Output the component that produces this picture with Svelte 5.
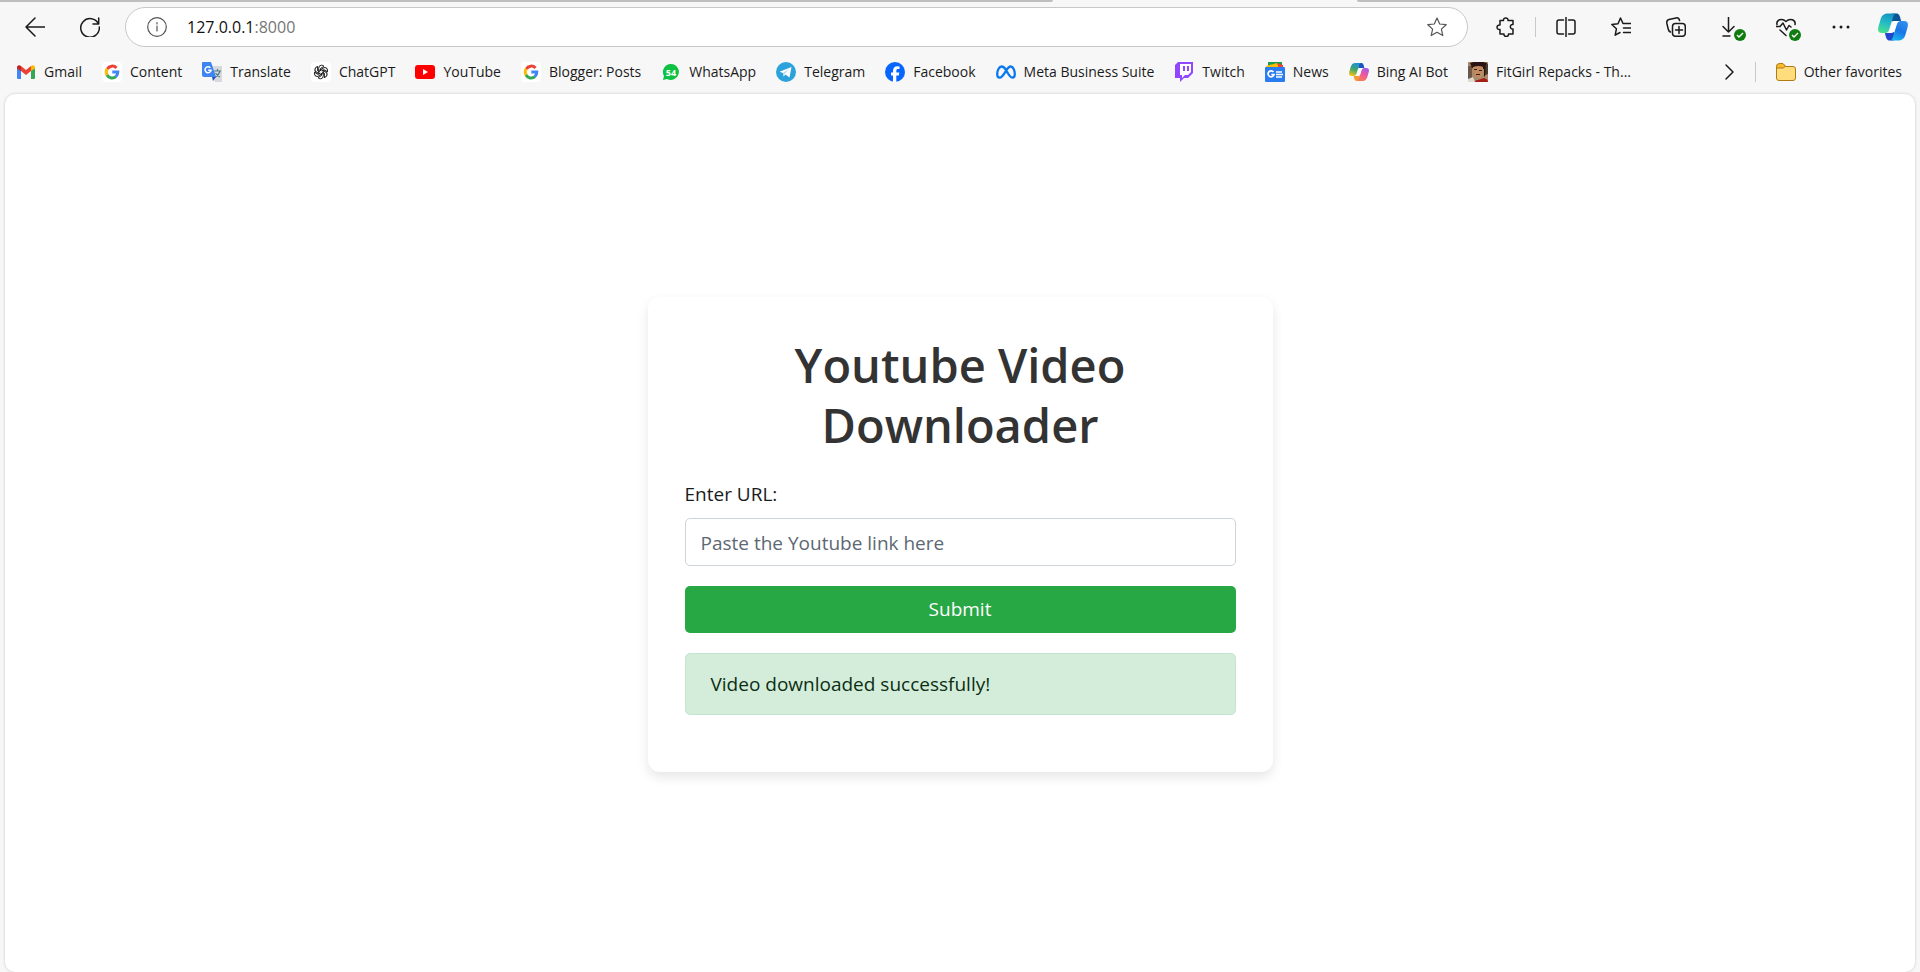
<script>
  let url = $state('');

  const bookmarks = [
    { id: 'gmail', label: 'Gmail' },
    { id: 'google', label: 'Content' },
    { id: 'translate', label: 'Translate' },
    { id: 'chatgpt', label: 'ChatGPT' },
    { id: 'youtube', label: 'YouTube' },
    { id: 'google', label: 'Blogger: Posts' },
    { id: 'whatsapp', label: 'WhatsApp' },
    { id: 'telegram', label: 'Telegram' },
    { id: 'facebook', label: 'Facebook' },
    { id: 'meta', label: 'Meta Business Suite' },
    { id: 'twitch', label: 'Twitch' },
    { id: 'news', label: 'News' },
    { id: 'copilot', label: 'Bing AI Bot' },
    { id: 'portrait', label: 'FitGirl Repacks - Th...' }
  ];
</script>

{#snippet copilot(id)}
  <defs>
    <linearGradient id="{id}-a" x1="0.6" y1="0" x2="0.3" y2="1">
      <stop offset="0" stop-color={id === 'small' ? '#1c8fd8' : '#1593c4'} />
      <stop offset="0.5" stop-color={id === 'small' ? '#3fa66a' : '#25bcc6'} />
      <stop offset="1" stop-color={id === 'small' ? '#f5c518' : '#4be08c'} />
    </linearGradient>
    <linearGradient id="{id}-b" x1="0.7" y1="0" x2="0.3" y2="1">
      <stop offset="0" stop-color={id === 'small' ? '#a25be8' : '#2f8ff0'} />
      <stop offset="0.5" stop-color={id === 'small' ? '#ee5a9c' : '#1b76e6'} />
      <stop offset="1" stop-color={id === 'small' ? '#fa7b52' : '#19b5f0'} />
    </linearGradient>
  </defs>
  <path fill={id === 'small' ? '#1a56c0' : '#0b5596'} d="M14 .5h4.500c2.500 0 3.500 2 4.500 7.500h-4l-5 1z" />
  <path fill={id === 'small' ? '#f79a2d' : '#2346cc'} d="M16 27.500h-4.500c-2.500 0-3.500-2-4.500-7.500h4l5-1z" />
  <path fill="url(#{id}-a)" d="M10 .5h8c-2 .500-2.500 2-3.500 5.500l-3 9.500c-1 3.500-2 4.500-5 4.500H4c-4 0-4.500-3-3.500-6.500l2-7C3.500 3 5.500.5 10 .5z" />
  <path fill="url(#{id}-b)" d="M20 27.500h-8c2-.500 2.500-2 3.500-5.500l3-9.500c1-3.500 2-4.500 5-4.500H26c4 0 4.500 3 3.500 6.500l-2 7c-1 3.500-3 6-7.500 6z" />
  <path fill="#fff" d="M14.500 8H21q-2 1-2.500 3.500l-1.800 5.500q-1 3-3.200 3H9.500q2-1 2.500-3.500l1.500-5z" />
{/snippet}

{#snippet site(id)}
  {#if id === 'gmail'}
    <svg viewBox="0 0 20 20" aria-hidden="true">
      <path fill="#4285f4" d="M1 5v11q0 1 1 1h3V8z" />
      <path fill="#34a853" d="M15 8v9h3q1 0 1-1V5z" />
      <path fill="#ea4335" d="M5 4l5 4 5-4v5l-5 4-5-4z" />
      <path fill="#c5221f" d="M1 5.500C1 3 3.500 2.500 5 4v5L1 6.500z" />
      <path fill="#fbbc04" d="M19 5.500C19 3 16.500 2.500 15 4v5l4-2.500z" />
    </svg>
  {:else if id === 'google'}
    <svg viewBox="0 0 20 20" aria-hidden="true">
      <rect width="20" height="20" rx="4" fill="#fff" />
      <g fill="none" stroke-width="3">
        <path stroke="#ea4335" d="M5.200 7A5.800 5.800 0 0 1 14.500 6" />
        <path stroke="#fbbc05" d="M5.200 13.200A6 6 0 0 1 5.200 6.800" />
        <path stroke="#34a853" d="M5 13a5.900 5.900 0 0 0 9 1.600" />
        <path stroke="#4285f4" d="M10.300 10h5.500q0 3-2 4.700" />
      </g>
    </svg>
  {:else if id === 'translate'}
    <svg viewBox="0 0 20 20" aria-hidden="true">
      <path fill="#d7d9dc" d="M8 4h12v16h-7z" />
      <path stroke="#4d7f86" stroke-width="1.200" fill="none" d="M12 9h7M15.500 7v2M18 9q-1 4-5 6M13.500 11q2 3 4.500 4" />
      <path fill="#3f84f3" d="M1 0h8l5 15H2q-2 0-2-2V1q0-1 1-1z" />
      <path fill="#2750c0" d="M10 15h4l-3 4z" />
      <path fill="none" stroke="#fff" stroke-width="1.500" d="M8.300 5.700A3 3 0 1 0 9 8.300H6.200" />
    </svg>
  {:else if id === 'chatgpt'}
    <svg viewBox="0 0 20 20" aria-hidden="true">
      <rect width="20" height="20" rx="4" fill="#fff" />
      <g fill="none" stroke="#222" stroke-width="1" stroke-linejoin="round">
        {#each [0, 60, 120, 180, 240, 300] as turn}
          <path transform="rotate({turn} 10 10)" d="M7.700 11.300V6.200Q7.700 3.200 10.500 3.200Q12 3.200 13 4.300L9.500 6.400V9" />
        {/each}
      </g>
    </svg>
  {:else if id === 'youtube'}
    <svg viewBox="0 0 20 20" aria-hidden="true">
      <rect y="3" width="20" height="14" rx="3" fill="#f00" />
      <path fill="#fff" d="M8 7l5 3-5 3z" />
    </svg>
  {:else if id === 'whatsapp'}
    <svg viewBox="0 0 20 20" aria-hidden="true">
      <path fill="#0dc143" d="M10 2a8 8 0 1 1-4 15l-4 1 1-4A8 8 0 0 1 10 2z" />
      <text x="10" y="13.500" text-anchor="middle" class="unread">54</text>
    </svg>
  {:else if id === 'telegram'}
    <svg viewBox="0 0 20 20" aria-hidden="true">
      <circle cx="10" cy="10" r="10" fill="#2ba2dc" />
      <path fill="#fff" d="M3.500 9.800L15.500 5l-2 10.500-4-3-2 2-.5-3.500z" />
      <path fill="#b5d8ec" d="M7 11l6-4-4.500 5-1 2.500z" />
    </svg>
  {:else if id === 'facebook'}
    <svg viewBox="0 0 20 20" aria-hidden="true">
      <circle cx="10" cy="10" r="10" fill="#0866ff" />
      <path fill="#fff" d="M8 20v-6.500H6v-3h2V9c0-3.300 1.500-4.800 4.500-4.800l2 .2v2.700h-1.300c-1.400 0-1.900.6-1.900 1.900v1.500h3l-.5 3h-2.500V20z" />
    </svg>
  {:else if id === 'meta'}
    <svg viewBox="0 0 20 20" aria-hidden="true">
      <path fill="none" stroke="#0a78f0" stroke-width="2.300" d="M10 8C8.500 5.500 7.200 4.500 5.700 4.500 3 4.500 1.200 8.500 1.200 12c0 2.500 1 3.700 2.500 3.700C6 15.700 7.500 13 10 8.800 12 5.500 13.200 4.500 14.700 4.500c2.500 0 4.100 4 4.100 7.500 0 2.500-1 3.700-2.500 3.700C14 15.700 12.500 12.500 10 8z" />
    </svg>
  {:else if id === 'twitch'}
    <svg viewBox="0 0 20 20" aria-hidden="true">
      <path fill="#9146ff" d="M4 0h15v11l-5 5h-4l-4 4v-4H1V3z" />
      <path fill="#fff" d="M6 2h11v8l-3 3h-3l-3 3v-3H6z" />
      <path fill="#9146ff" d="M9 4h2v5H9zM13 4h2v5h-2z" />
    </svg>
  {:else if id === 'news'}
    <svg viewBox="0 0 20 20" aria-hidden="true">
      <path fill="#1e9c50" d="M3 0h14v6H3z" />
      <path fill="#ea4335" d="M11 1l7 2v4h-9z" />
      <path fill="#fbbc04" d="M1 4l11-3 2 6H2z" />
      <rect y="5" width="20" height="15" rx="1" fill="#2a7df0" />
      <path fill="none" stroke="#fff" stroke-width="1.700" d="M8.500 10A3 3 0 1 0 9 12.500H6.300M11 10h6M11 12.500h7M11 15h6" />
    </svg>
  {:else if id === 'copilot'}
    <svg viewBox="0 0 30 28" aria-hidden="true">{@render copilot('small')}</svg>
  {:else if id === 'portrait'}
    <svg viewBox="0 0 20 20" aria-hidden="true">
      <rect width="20" height="20" fill="#a98a6a" />
      <path fill="#6d5747" d="M0 4h4v16H0z" />
      <path fill="#e0dad2" d="M0 17l5-2 2 5H0z" />
      <path fill="#2a1512" d="M2 1q8-3 17 0v10l-3 4V7L4 6z" />
      <path fill="#c08a5e" d="M5 5q6-2 10 0v6q-1 5-5 5-3-1-5-7z" />
      <path fill="#3a1c16" d="M6 7h3v1H6zM11 8h3v1h-3zM8 12h4v1H8z" />
      <path fill="#a51d16" d="M7 20q0-2 3-2l6-2q4 1 4 4z" />
      <path fill="#4c3b2f" d="M18 2h2v10l-3 1z" />
    </svg>
  {/if}
{/snippet}

<div class="browser">
  <div class="tabs"><span class="tab-left"></span><span class="tab-right"></span></div>

  <header class="toolbar">
    <button class="tool" aria-label="Back">
      <svg class="line" viewBox="0 0 20 20"><path d="M20 10H1M10 1L1 10l9 9" /></svg>
    </button>
    <button class="tool" aria-label="Refresh">
      <svg class="line" viewBox="0 0 20 20"><path d="M18.500 7A9.300 9.300 0 1 0 19.300 10M18.700 1v6H13" /></svg>
    </button>

    <div class="address">
      <button class="plain" aria-label="Site information">
        <svg class="thin" viewBox="0 0 20 20"><circle cx="10" cy="10" r="9.300" /><path d="M10 9v5M10 5.500V7" /></svg>
      </button>
      <a class="location" href="#top">127.0.0.1<span>:8000</span></a>
      <button class="plain" aria-label="Add to favorites">
        <svg class="thin" viewBox="0 0 20 20"><path d="M10 1l2.700 6 6.500.700-4.800 4.400 1.400 6.500L10 15.300l-5.800 3.300 1.400-6.500L.8 7.700 7.300 7z" /></svg>
      </button>
    </div>

    <button class="tool" aria-label="Extensions">
      <svg class="line" viewBox="0 0 20 20"><path d="M4 3.500h3.500c-.5-3.500 5-3.500 4.500 0H17v4c-3.500-.700-3.500 5.200 0 4.500v5h-4.500c.5 3.300-5 3.300-4.500 0H4v-4.500c-4 .600-4-5 0-4.500z" /></svg>
    </button>
    <span class="rule"></span>
    <button class="tool" aria-label="Split screen">
      <svg class="line" viewBox="0 0 20 20"><path d="M10 0v20M7.500 3H3Q1 3 1 5v10q0 2 2 2h4.500M12.500 3H17q2 0 2 2v10q0 2-2 2h-4.500" /></svg>
    </button>
    <button class="tool" aria-label="Favorites">
      <svg class="line" viewBox="0 0 20 20"><path d="M13.500 6.500H12L9.500 1 7 6.700.8 7.500l4.600 4.300-1.200 6.400L9 15.500M13 6.500h7M12.500 11H20M12.500 15.500H20" /></svg>
    </button>
    <button class="tool" aria-label="Collections">
      <svg class="line" viewBox="0 0 20 20"><rect x="6.500" y="6.500" width="12.800" height="12.800" rx="3" /><path d="M13 9.500v7M9.500 13h7M4.500 15C3 14.500 2.500 13.500 2.200 12L.9 6.500C.4 4 1.200 3 3 2.500L10 .9c2-.4 3 .300 3.600 2.600" /></svg>
    </button>
    <button class="tool" aria-label="Downloads">
      <svg class="line" viewBox="0 0 20 20"><path d="M7.500 0v15M2 9.500L7.500 15 13 9.500M2 19h7" /></svg>
      <svg class="badge" viewBox="0 0 12 12"><circle cx="6" cy="6" r="6" /><path d="M3 6l2 2 4-4" /></svg>
    </button>
    <button class="tool" aria-label="Browser essentials">
      <svg class="line" viewBox="0 0 20 20"><path d="M1 7.500C0 3 6 .500 10 4.500 14 .500 20 3 19 7.500M0 9.500h4L7 6l3.500 7 2.500-4.500 2 1.500M4 13l6 5.500" /></svg>
      <svg class="badge" viewBox="0 0 12 12"><circle cx="6" cy="6" r="6" /><path d="M3 6l2 2 4-4" /></svg>
    </button>
    <button class="tool" aria-label="Settings and more">
      <svg class="dots" viewBox="0 0 20 20"><circle cx="3" cy="10" r="1.500" /><circle cx="10" cy="10" r="1.500" /><circle cx="17" cy="10" r="1.500" /></svg>
    </button>
    <button class="tool brand" aria-label="Copilot">
      <svg viewBox="0 0 30 28">{@render copilot('large')}</svg>
    </button>
  </header>

  <nav class="bookmarks" aria-label="Favorites bar">
    {#each bookmarks as mark}
      <a href="#top">{@render site(mark.id)}{mark.label}</a>
    {/each}
    <button class="plain more" aria-label="More favorites">
      <svg class="line" viewBox="0 0 20 20"><path d="M7 3l7 7-7 7" /></svg>
    </button>
    <span class="rule"></span>
    <a href="#top">
      <svg viewBox="0 0 20 20" aria-hidden="true">
        <path fill="#ffdc7c" stroke="#b07a12" d="M.5 5q0-3 3-3H7l2.500 2.500H17q2.500 0 2.500 2.500v9q0 2.500-2.500 2.500H3Q.5 18.500.5 16z" />
        <path fill="#f5bd2e" stroke="#b07a12" d="M.5 6V4.500q0-3 3-3H7L9.500 4 7.500 6z" />
      </svg>
      Other favorites
    </a>
  </nav>

  <main class="page" id="top">
    <form class="card" onsubmit={(e) => e.preventDefault()}>
      <h1>Youtube Video Downloader</h1>
      <label for="url">Enter URL:</label>
      <input id="url" type="text" placeholder="Paste the Youtube link here" bind:value={url} />
      <button class="submit" type="submit">Submit</button>
      <p class="alert" role="status">Video downloaded successfully!</p>
    </form>
  </main>
</div>

<style>
  :global(body) {
    margin: 0;
    background: #f7f7f7;
  }

  .browser,
  .browser * {
    box-sizing: border-box;
  }

  .browser {
    display: flex;
    flex-direction: column;
    min-height: 100vh;
    font-family: 'Open Sans', 'Noto Sans', sans-serif;
    color: #1b1b1b;
  }

  button {
    border: 0;
    background: none;
    padding: 0;
    font: inherit;
    color: inherit;
  }

  a {
    color: inherit;
    text-decoration: none;
  }

  svg {
    display: block;
    flex: none;
    width: 20px;
    height: 20px;
  }

  .line,
  .thin {
    fill: none;
    stroke: #1b1b1b;
    stroke-width: 1.5;
    stroke-linecap: round;
    stroke-linejoin: round;
  }

  .thin {
    stroke: #555;
    stroke-width: 1.2;
  }

  .tabs {
    display: grid;
    grid-template-columns: 1053fr 563fr;
    column-gap: 304px;
    height: 2px;
  }

  .tabs span {
    background: #bebebe;
  }

  .tab-left {
    border-bottom-right-radius: 4px;
  }

  .tab-right {
    border-bottom-left-radius: 4px;
  }

  .toolbar {
    display: flex;
    align-items: center;
    height: 50px;
    padding: 0 2px 0 7px;
  }

  .toolbar .rule {
    margin: 0 2px;
  }

  .tool {
    position: relative;
    display: flex;
    align-items: center;
    justify-content: center;
    flex: none;
    width: 55px;
    height: 40px;
  }

  .brand {
    width: 50px;
  }

  .brand svg {
    width: 30px;
    height: 28px;
  }

  .badge {
    position: absolute;
    right: 12px;
    bottom: 6px;
    width: 12px;
    height: 12px;
    fill: #107c10;
  }

  .badge path {
    fill: none;
    stroke: #fff;
    stroke-width: 1.4;
  }

  .dots {
    fill: #1b1b1b;
  }

  .address {
    display: flex;
    align-items: center;
    flex: 1;
    height: 40px;
    margin: 0 10px 0 8px;
    padding: 0 20px 0 21px;
    border: 1px solid #c8c8c8;
    border-radius: 20px;
    background: #fff;
  }

  .location {
    flex: 1;
    margin-left: 20px;
    font-size: 16px;
    line-height: 24px;
    color: #111;
  }

  .location span {
    color: #767676;
  }

  .rule {
    flex: none;
    width: 1px;
    height: 20px;
    background: #c8c8c8;
  }

  .bookmarks {
    display: flex;
    align-items: center;
    gap: 20px;
    height: 42px;
    padding: 0 18px 2px 16px;
    font-size: 14px;
    line-height: 20px;
    white-space: nowrap;
  }

  .bookmarks a {
    display: flex;
    align-items: center;
    gap: 8px;
  }

  .more {
    margin-left: auto;
    margin-right: -4px;
  }

  .unread {
    fill: #fff;
    font-size: 9px;
    font-weight: 700;
  }

  .page {
    display: flex;
    align-items: center;
    justify-content: center;
    flex: 1;
    margin: 0 5px;
    padding-top: 2px;
    border-radius: 10px;
    background: #fff;
    box-shadow: 0 0 3px rgba(0, 0, 0, 0.2);
  }

  .card {
    display: flex;
    flex-direction: column;
    width: 100%;
    max-width: 625px;
    padding: 37px;
    border-radius: 12px;
    box-shadow: 0 5px 12px rgba(0, 0, 0, 0.1);
    font-size: 19px;
    line-height: 30px;
  }

  h1 {
    margin: 0 0 24px;
    padding: 1px 60px 0;
    font-size: 47px;
    font-weight: 600;
    line-height: 60px;
    text-align: center;
    color: #333;
  }

  label {
    margin-bottom: 9px;
  }

  input {
    height: 48px;
    margin-bottom: 20px;
    padding: 2px 15px 0;
    border: 1px solid #ced4da;
    border-radius: 5px;
    background: #fff;
    font: inherit;
    color: #495057;
  }

  input::placeholder {
    color: #5d6873;
    opacity: 1;
  }

  .submit {
    height: 47px;
    margin-bottom: 20px;
    border-radius: 5px;
    background: #28a745;
    color: #fff;
  }

  .alert {
    margin: 0 0 20px;
    padding: 15px 25px;
    border: 1px solid #c3e6cb;
    border-radius: 5px;
    background: #d4edda;
    color: #0b2e13;
  }
</style>
